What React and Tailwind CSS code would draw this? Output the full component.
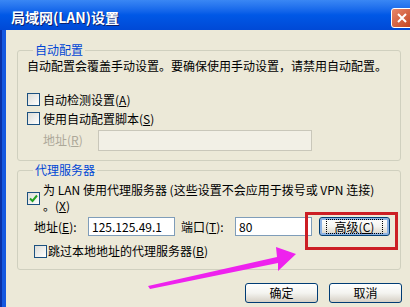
import React from 'react';

const font = "font-['SimSun','Noto_Sans_CJK_SC',sans-serif]";

const Check = ({ checked }) => (
  <span className="flex h-[13px] w-[13px] shrink-0 items-center justify-center border border-[#1C5180] bg-gradient-to-br from-[#DCDCD7] to-white">
    {checked && (
      <svg width="9" height="9" viewBox="0 0 9 9">
        <path d="M1 4.5 L3.5 7 L8 1.5" fill="none" stroke="#21A121" strokeWidth="2" />
      </svg>
    )}
  </span>
);

const Key = ({ k }) => (
  <span>
    (<span className="underline">{k}</span>)
  </span>
);

const XpButton = ({ children, focused, className = '' }) => (
  <button
    className={`flex items-center justify-center rounded-[3px] border border-[#003C74] bg-gradient-to-b from-white via-[#F4F4F0] to-[#D6D0C5] text-[12px] text-black ${
      focused ? 'shadow-[inset_0_0_0_2px_#8DB2E3]' : ''
    } ${className}`}
  >
    <span className={focused ? 'border border-dotted border-black px-[8px] leading-[13px]' : ''}>{children}</span>
  </button>
);

export default function App() {
  return (
    <div className={`relative flex h-[307px] w-[410px] flex-col overflow-hidden bg-[#ECE9D8] text-[12px] text-black ${font}`}>
      {/* title bar */}
      <div className="flex h-[30px] shrink-0 items-start bg-gradient-to-b from-[#3A87F4] via-[#0058E6] to-[#0049D6] pl-[11px]">
        <span className="mt-[9px] text-[14px] font-bold leading-[16px] text-white [text-shadow:1px_1px_#0A1E6E]">
          局域网(LAN)设置
        </span>
        <span className="ml-auto mr-[-3px] mt-[8px] flex h-[20px] w-[22px] items-center justify-center rounded-[3px] border border-white bg-gradient-to-br from-[#E8876A] to-[#C1411C]">
          <svg width="10" height="10" viewBox="0 0 10 10">
            <path d="M1 1 L9 9 M9 1 L1 9" stroke="white" strokeWidth="2" />
          </svg>
        </span>
      </div>

      <div className="flex flex-1">
        <div className="w-[6px] shrink-0 border-l-2 border-[#0831A8] bg-[#1458E0]" />
        <div className="flex flex-1 flex-col">
          {/* auto config group */}
          <fieldset className="ml-[11px] mr-[9px] mt-[13px] rounded-[3px] border border-[#D0D0BF] pb-[9px] pl-[9px]">
            <legend className="ml-[6px] px-[2px] leading-[14px] text-[#0046D5]">自动配置</legend>
            <div className="mt-[2px] whitespace-nowrap leading-[14px]">
              自动配置会覆盖手动设置。要确保使用手动设置，请禁用自动配置。
            </div>
            <div className="mt-[17px] flex h-[19px] items-center gap-[3px]">
              <Check />
              <span>
                自动检测设置<Key k="A" />
              </span>
            </div>
            <div className="flex h-[19px] items-center gap-[3px]">
              <Check />
              <span>
                使用自动配置脚本<Key k="S" />
              </span>
            </div>
            <div className="mt-[1px] flex h-[22px] items-center">
              <span className="ml-[16px] w-[55px] text-[#ACA899]">
                地址<Key k="R" />
              </span>
              <span className="h-[21px] w-[214px] border border-[#C9C7BA] bg-[#F2F0E6]" />
            </div>
          </fieldset>

          {/* proxy group */}
          <fieldset className="ml-[11px] mr-[9px] mt-[2px] rounded-[3px] border border-[#D0D0BF] pb-[9px] pl-[9px]">
            <legend className="ml-[6px] px-[2px] leading-[14px] text-[#0046D5]">代理服务器</legend>
            <div className="mt-[5px] flex gap-[3px]">
              <span className="mt-[10px]">
                <Check checked />
              </span>
              <div className="whitespace-nowrap leading-[16px]">
                <div>为 LAN 使用代理服务器 (这些设置不会应用于拨号或 VPN 连接)</div>
                <div>
                  。<Key k="X" />
                </div>
              </div>
            </div>
            <div className="ml-[7px] mt-[3px] flex h-[19px] items-center">
              <span className="w-[54px]">
                地址<Key k="E" />:
              </span>
              <span className="flex h-[19px] w-[87px] items-center border border-[#7F9DB9] bg-white pl-[3px] leading-none">
                125.125.49.1
              </span>
              <span className="ml-[6px] w-[54px]">
                端口<Key k="T" />:
              </span>
              <span className="flex h-[19px] w-[77px] items-center border border-[#7F9DB9] bg-white pl-[3px] leading-none">
                80
              </span>
              <XpButton focused className="ml-[7px] h-[19px] w-[71px]">
                高级<Key k="C" />
              </XpButton>
            </div>
            <div className="ml-[7px] mt-[6px] flex h-[18px] items-center gap-[1px]">
              <Check />
              <span>
                跳过本地地址的代理服务器<Key k="B" />
              </span>
            </div>
          </fieldset>

          <div className="mr-[8px] mt-[13px] flex justify-end gap-[11px]">
            <XpButton className="h-[20px] w-[73px]">确定</XpButton>
            <XpButton className="h-[20px] w-[73px]">取消</XpButton>
          </div>
        </div>
      </div>

      {/* annotation overlay */}
      <div className="pointer-events-none absolute left-[305px] top-[212px] h-[38px] w-[93px] border-[3px] border-[#CC1E24]" />
      <svg className="pointer-events-none absolute left-0 top-0" width="410" height="307" viewBox="0 0 410 307">
        <polygon points="148,286 277,257 276,247 296,254 278,271 278,263 150,289" fill="#EE22EE" />
      </svg>
    </div>
  );
}
